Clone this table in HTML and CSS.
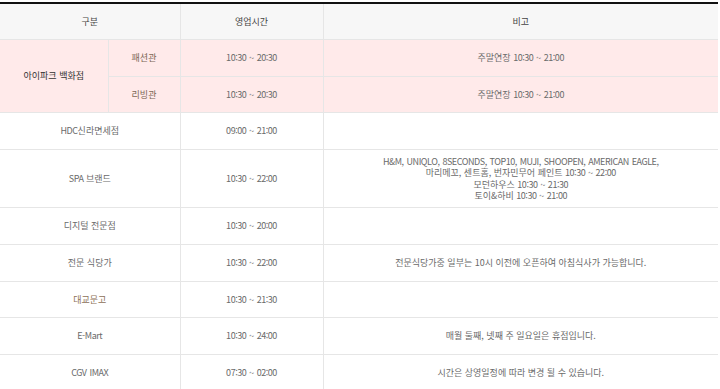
FILE: index.html
```html
<!DOCTYPE html>
<html lang="ko">
<head>
<meta charset="utf-8">
<title>영업시간</title>
<link rel="stylesheet" href="styles.css">
</head>
<body>
<div class="wrap">
<table class="hours">
  <colgroup>
    <col class="c1"><col class="c2"><col class="c3"><col class="c4">
  </colgroup>
  <thead>
    <tr>
      <th colspan="2">구분</th>
      <th>영업시간</th>
      <th>비고</th>
    </tr>
  </thead>
  <tbody>
    <tr class="hl">
      <td rowspan="2" class="main">아이파크 백화점</td>
      <td class="sub">패션관</td>
      <td><span class="en">10:30 ~ 20:30</span></td>
      <td>주말연장 <span class="en">10:30 ~ 21:00</span></td>
    </tr>
    <tr class="hl">
      <td class="sub">리빙관</td>
      <td><span class="en">10:30 ~ 20:30</span></td>
      <td>주말연장 <span class="en">10:30 ~ 21:00</span></td>
    </tr>
    <tr>
      <td colspan="2"><span class="en">HDC</span>신라면세점</td>
      <td><span class="en">09:00 ~ 21:00</span></td>
      <td></td>
    </tr>
    <tr class="tall">
      <td colspan="2"><span class="en">SPA</span> 브랜드</td>
      <td><span class="en">10:30 ~ 22:00</span></td>
      <td><span class="en">H&amp;M, UNIQLO, 8SECONDS, TOP10, MUJI, SHOOPEN, AMERICAN EAGLE,</span><br>마리메꼬, 센트홈, 번자민무어 페인트 <span class="en">10:30 ~ 22:00</span><br>모던하우스 <span class="en">10:30 ~ 21:30</span><br>토이&amp;하비 <span class="en">10:30 ~ 21:00</span></td>
    </tr>
    <tr>
      <td colspan="2">디지털 전문점</td>
      <td><span class="en">10:30 ~ 20:00</span></td>
      <td></td>
    </tr>
    <tr>
      <td colspan="2">전문 식당가</td>
      <td><span class="en">10:30 ~ 22:00</span></td>
      <td>전문식당가중 일부는 10시 이전에 오픈하여 아침식사가 가능합니다.</td>
    </tr>
    <tr>
      <td colspan="2" class="book">대교문고</td>
      <td><span class="en">10:30 ~ 21:30</span></td>
      <td></td>
    </tr>
    <tr>
      <td colspan="2"><span class="en">E-Mart</span></td>
      <td><span class="en">10:30 ~ 24:00</span></td>
      <td>매월 둘째, 넷째 주 일요일은 휴점입니다.</td>
    </tr>
    <tr>
      <td colspan="2"><span class="en">CGV IMAX</span></td>
      <td><span class="en">07:30 ~ 02:00</span></td>
      <td>시간은 상영일정에 따라 변경 될 수 있습니다.</td>
    </tr>
  </tbody>
</table>
</div>
</body>
</html>
```
FILE: styles.css
```css
html, body {
  margin: 0;
  padding: 0;
  background: #fff;
}
.wrap {
  padding: 2px 2px 0 0;
}
.hours {
  width: 718px;
  border-collapse: collapse;
  table-layout: fixed;
  border-top: 2px solid #111;
  font-family: "Noto Sans CJK KR", "Noto Sans", sans-serif;
  font-size: 9px;
  line-height: 11.5px;
  color: #6a6a6a;
}
.en {
  letter-spacing: -0.45px;
  word-spacing: 0.8px;
}
.c1 { width: 108px; }
.c2 { width: 72px; }
.c3 { width: 143px; }
.c4 { width: 395px; }
.hours th,
.hours td {
  height: 35.75px;
  padding: 0;
  text-align: center;
  vertical-align: middle;
  border: 1px solid #e6e6e6;
  font-weight: normal;
}
.hours th:first-child,
.hours td.main,
.hours tr:not(.hl) td:first-child,
.hours tr.hl + tr.hl td:first-child {
  border-left: 0;
}
.hours tr.hl + tr.hl td.sub {
  border-left: 1px solid #e6e6e6;
}
.hours th:last-child,
.hours td:last-child {
  border-right: 0;
}
.hours th {
  background: #f7f7f7;
  color: #444;
  height: 34.75px;
  border-top: 0;
}
.hours tr.hl td {
  background: #ffeaea;
}
.hours td.main {
  color: #333;
}
.hours td.sub {
  color: #7b6655;
}
.hours td.book {
  color: #8d7058;
}
.hours tr.tall td {
  padding: 5.5px 0;
  height: auto;
}
```
